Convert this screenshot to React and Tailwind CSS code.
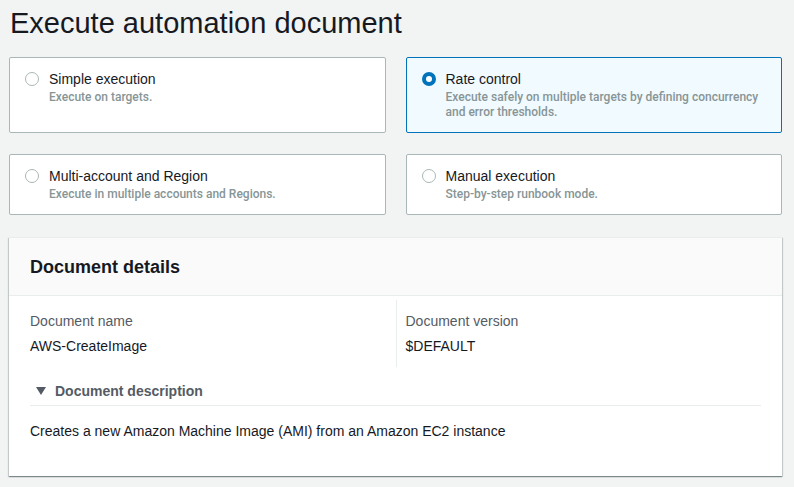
import React from "react";

const font = { fontFamily: '"Liberation Sans", Arial, sans-serif' };

function Radio({ checked }) {
  if (checked) {
    return (
      <span className="mt-[4px] flex h-[14px] w-[14px] shrink-0 items-center justify-center rounded-full bg-[#0073bb]">
        <span className="h-[6px] w-[6px] rounded-full bg-white" />
      </span>
    );
  }
  return (
    <span className="mt-[4px] h-[14px] w-[14px] shrink-0 rounded-full border-[1.5px] border-[#aab7b8] bg-white" />
  );
}

function Tile({ title, desc, checked }) {
  return (
    <div
      className={
        "flex gap-[10px] rounded-[2px] border pl-[15px] pr-[15px] pt-[10px] pb-[12px] " +
        (checked ? "border-[#0073bb] bg-[#f1faff]" : "border-[#aab7b8] bg-white")
      }
    >
      <Radio checked={checked} />
      <div className="flex flex-col">
        <div className="text-[14px] leading-[22px] text-[#16191f]">{title}</div>
        <div className="font-['Roboto',sans-serif] text-[12px] font-medium leading-[15px] text-[#879596]">{desc}</div>
      </div>
    </div>
  );
}

export default function App() {
  return (
    <div className="min-h-[487px] w-[794px] bg-[#f2f3f3] pl-[9px] pr-[12px]" style={font}>
      <h1 className="pl-[1px] pt-[6px] text-[29px] leading-[34px] text-[#16191f]">
        Execute automation document
      </h1>
      <div className="mt-[17px] grid grid-cols-2 gap-x-[20px] gap-y-[21px]">
        <Tile title="Simple execution" desc="Execute on targets." />
        <Tile
          checked
          title="Rate control"
          desc="Execute safely on multiple targets by defining concurrency and error thresholds."
        />
        <Tile title="Multi-account and Region" desc="Execute in multiple accounts and Regions." />
        <Tile title="Manual execution" desc="Step-by-step runbook mode." />
      </div>
      <div className="mt-[22px] h-[239px] border-t border-[#eaeded] bg-white shadow-[0_1px_1px_0_rgba(0,28,36,0.3),1px_1px_1px_0_rgba(0,28,36,0.15),-1px_1px_1px_0_rgba(0,28,36,0.15)]">
        <div className="flex h-[58px] items-center border-b border-[#eaeded] bg-[#fafafa] px-[21px]">
          <h2 className="text-[18px] font-bold leading-[22px] text-[#16191f]">Document details</h2>
        </div>
        <div className="px-[21px] pt-[4px]">
          <div className="grid grid-cols-2">
            <div className="flex flex-col gap-[3px] py-[10px]">
              <div className="text-[14px] leading-[22px] text-[#545b64]">Document name</div>
              <div className="text-[14px] leading-[22px] text-[#16191f]">AWS-CreateImage</div>
            </div>
            <div className="flex flex-col gap-[3px] border-l border-[#eaeded] py-[10px] pl-[9px]">
              <div className="text-[14px] leading-[22px] text-[#545b64]">Document version</div>
              <div className="text-[14px] leading-[22px] text-[#16191f]">$DEFAULT</div>
            </div>
          </div>
          <div className="mt-[13px] flex items-center gap-[9px] border-b border-[#eaeded] pb-[3px] pl-[6px]">
            <svg width="10" height="8" viewBox="0 0 10 8">
              <path d="M0 0 L10 0 L5 8 Z" fill="#545b64" />
            </svg>
            <span className="text-[14px] font-bold leading-[22px] text-[#545b64]">Document description</span>
          </div>
          <div className="pt-[14px] text-[14px] leading-[22px] text-[#16191f]">
            Creates a new Amazon Machine Image (AMI) from an Amazon EC2 instance
          </div>
        </div>
      </div>
    </div>
  );
}
